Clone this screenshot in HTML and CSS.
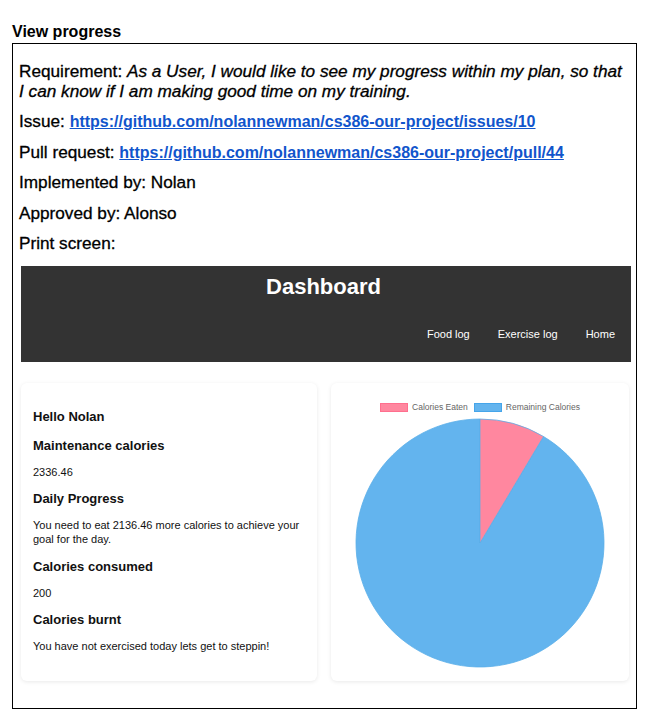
FILE: index.html
```html
<!DOCTYPE html>
<html>
<head>
<meta charset="utf-8">
<link rel="stylesheet" href="styles.css">
</head>
<body>
<div class="title">View progress</div>
<div class="box">
  <p class="line">Requirement: <em>As a User, I would like to see my progress within my plan, so that I can know if I am making good time on my training.</em></p>
  <p class="line">Issue: <a class="link" href="#">https://github.com/nolannewman/cs386-our-project/issues/10</a></p>
  <p class="line">Pull request: <a class="link" href="#">https://github.com/nolannewman/cs386-our-project/pull/44</a></p>
  <p class="line">Implemented by: Nolan</p>
  <p class="line">Approved by: Alonso</p>
  <p class="line">Print screen:</p>
  <div class="shot">
    <header class="navbar">
      <h1 class="brand">Dashboard</h1>
      <nav class="nav">
        <span class="nav-link">Food log</span>
        <span class="nav-link">Exercise log</span>
        <span class="nav-link">Home</span>
      </nav>
    </header>
    <div class="cards">
      <section class="card info">
        <h3 class="h hello">Hello Nolan</h3>
        <h3 class="h">Maintenance calories</h3>
        <p class="t">2336.46</p>
        <h3 class="h">Daily Progress</h3>
        <p class="t">You need to eat 2136.46 more calories to achieve your goal for the day.</p>
        <h3 class="h">Calories consumed</h3>
        <p class="t">200</p>
        <h3 class="h">Calories burnt</h3>
        <p class="t">You have not exercised today lets get to steppin!</p>
      </section>
      <section class="card chart">
        <div class="legend">
          <span class="swatch pink"></span><span class="lg-text">Calories Eaten</span>
          <span class="swatch blue"></span><span class="lg-text">Remaining Calories</span>
        </div>
        <svg class="pie" width="250" height="250" viewBox="0 0 250 250">
          <path d="M125,125 L188.53,18.51 A124,124 0 1 1 125,1 Z" fill="#63b4ee" stroke="#5aaee9" stroke-width="0.8"/>
          <path d="M125,125 L125,1 A124,124 0 0 1 188.53,18.51 Z" fill="#ff879f" stroke="#5aaee9" stroke-width="0.8"/>
        </svg>
      </section>
    </div>
  </div>
</div>
</body>
</html>
```
FILE: styles.css
```css
* { box-sizing: border-box; }
body {
  margin: 0;
  background: #fff;
  font-family: "Liberation Sans", Arial, sans-serif;
  color: #000;
}
.title {
  font-weight: bold;
  font-size: 16px;
  line-height: 18px;
  padding: 23px 0 0 12px;
  height: 43px;
}
.box {
  margin-left: 12px;
  width: 625px;
  height: 666px;
  border: 1px solid #000;
  padding: 17px 10px 0 6px;
}
.line {
  margin: 0 0 10.4px 0;
  font-size: 17.2px;
  line-height: 20px;
  -webkit-text-stroke: 0.3px #000;
}
.line em { font-style: italic; }
.link {
  color: #1155cc;
  font-weight: bold;
  font-size: 16px;
  line-height: 16px;
  text-decoration: underline;
  -webkit-text-stroke: 0;
}
.shot {
  margin: 13px 0 0 2px;
  width: 610px;
}
.navbar {
  background: #333;
  height: 96px;
  padding-top: 8px;
  color: #fff;
}
.brand {
  margin: 0;
  padding-right: 5px;
  text-align: center;
  font-size: 22px;
  line-height: 26px;
  font-weight: bold;
}
.nav {
  margin-top: 27px;
  display: flex;
  justify-content: flex-end;
  gap: 28px;
  padding-right: 16px;
  font-size: 11px;
  line-height: 14px;
}
.cards {
  margin-top: 21px;
  display: flex;
  gap: 14px;
}
.card {
  background: #fff;
  border-radius: 6px;
  box-shadow: 0 1px 4px rgba(0,0,0,0.09);
  height: 298px;
}
.info {
  width: 296px;
  padding: 26px 12px 0 12px;
  display: flex;
  flex-direction: column;
  gap: 12px;
}
.h {
  margin: 0;
  font-size: 13px;
  line-height: 15px;
  font-weight: bold;
  color: #111;
}
.hello { margin-bottom: 2px; }
.t {
  margin: 0;
  font-size: 11px;
  line-height: 14px;
  color: #111;
}
.t + .h { margin-top: 0.5px; }
.chart {
  width: 298px;
  padding-top: 19px;
  display: flex;
  flex-direction: column;
  align-items: center;
}
.legend {
  display: flex;
  align-items: center;
  height: 11px;
  font-size: 8.5px;
  color: #666;
}
.swatch {
  width: 28px;
  height: 9px;
  margin-right: 4px;
}
.swatch.pink { background: #ff879f; border: 1px solid #ff6f8e; }
.swatch.blue { background: #63b4ee; border: 1px solid #45a5ea; margin-left: 6px; }
.pie {
  margin-top: 5px;
  display: block;
}
```
